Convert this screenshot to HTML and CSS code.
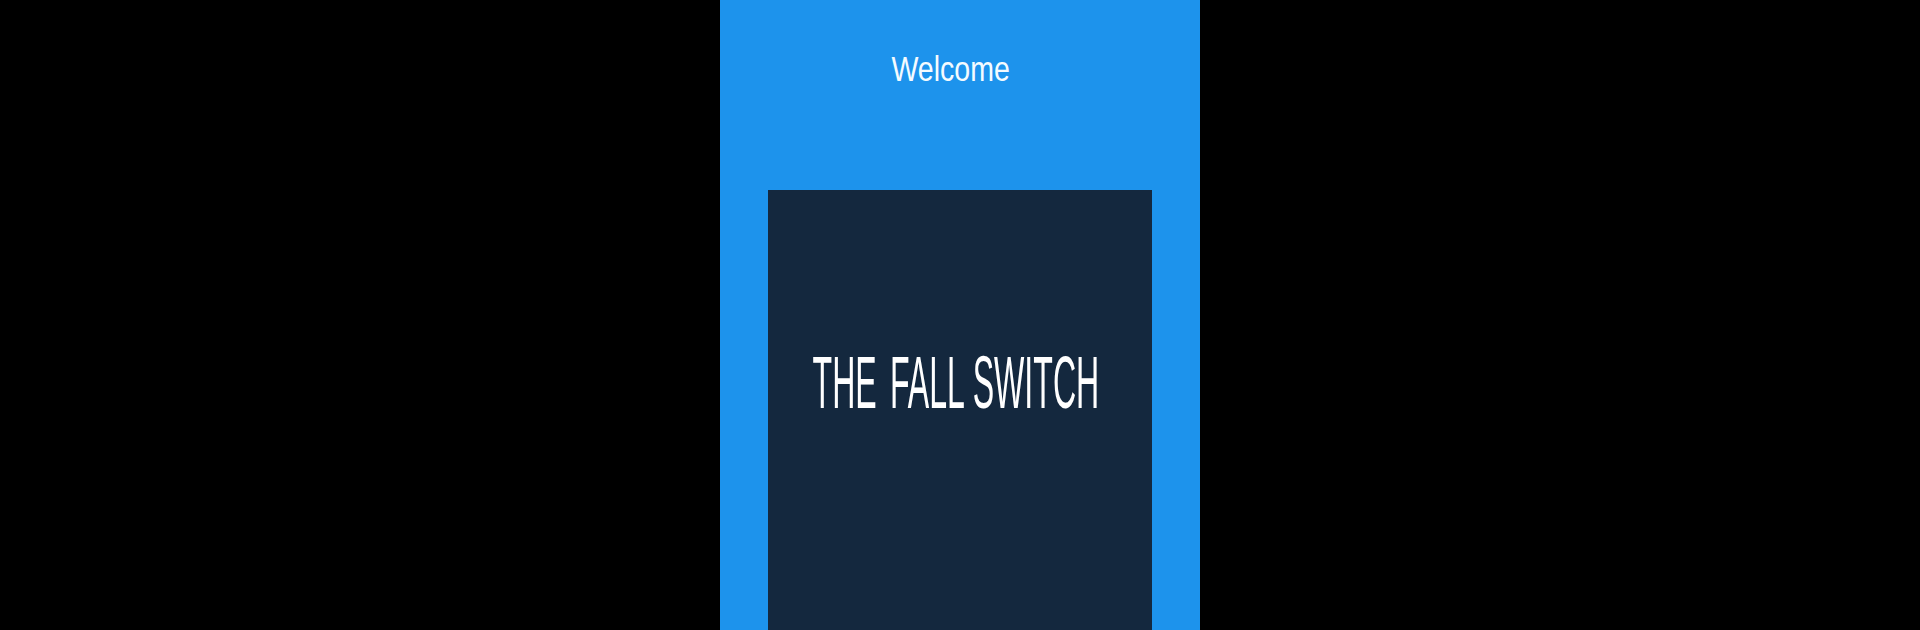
FILE: index.html
```html
<!DOCTYPE html>
<html>
<head>
<meta charset="utf-8">
<link rel="stylesheet" href="styles.css">
</head>
<body>
<div class="stage">
  <main class="panel">
    <header class="welcome"><span class="welcome-text">Welcome</span></header>
    <section class="card">
      <h1 class="title"><span class="title-text"><span class="word-gap">THE</span> FALL SWITCH</span></h1>
    </section>
  </main>
</div>
</body>
</html>
```
FILE: styles.css
```css
html, body {
  margin: 0;
  padding: 0;
  background: #000;
  height: 630px;
  overflow: hidden;
}
.stage {
  display: flex;
  justify-content: center;
  height: 630px;
}
.panel {
  width: 480px;
  height: 630px;
  background: #1d93ec;
  display: flex;
  flex-direction: column;
  align-items: center;
  padding-top: 49px;
  box-sizing: border-box;
  overflow: hidden;
}
.welcome {
  height: 40px;
  display: flex;
  justify-content: center;
  margin-bottom: 101px;
  margin-left: -18px;
}
.welcome-text {
  display: inline-block;
  font-family: "Liberation Sans", Arial, sans-serif;
  font-size: 35px;
  line-height: 40px;
  color: #f4fbff;
  transform: scaleX(0.815);
}
.card {
  width: 384px;
  flex: 0 0 600px;
  background: #14283e;
  padding-top: 152px;
  box-sizing: border-box;
  display: flex;
  flex-direction: column;
  align-items: center;
}
.title {
  margin: 0 0 0 -8px;
  font-weight: normal;
  height: 80px;
  white-space: nowrap;
  display: flex;
  justify-content: center;
}
.title-text {
  display: inline-block;
  font-family: "Liberation Sans", Arial, sans-serif;
  font-size: 75px;
  line-height: 80px;
  color: #ffffff;
  transform: scaleX(0.428);
}
.word-gap {
  margin-right: 10px;
}
```
